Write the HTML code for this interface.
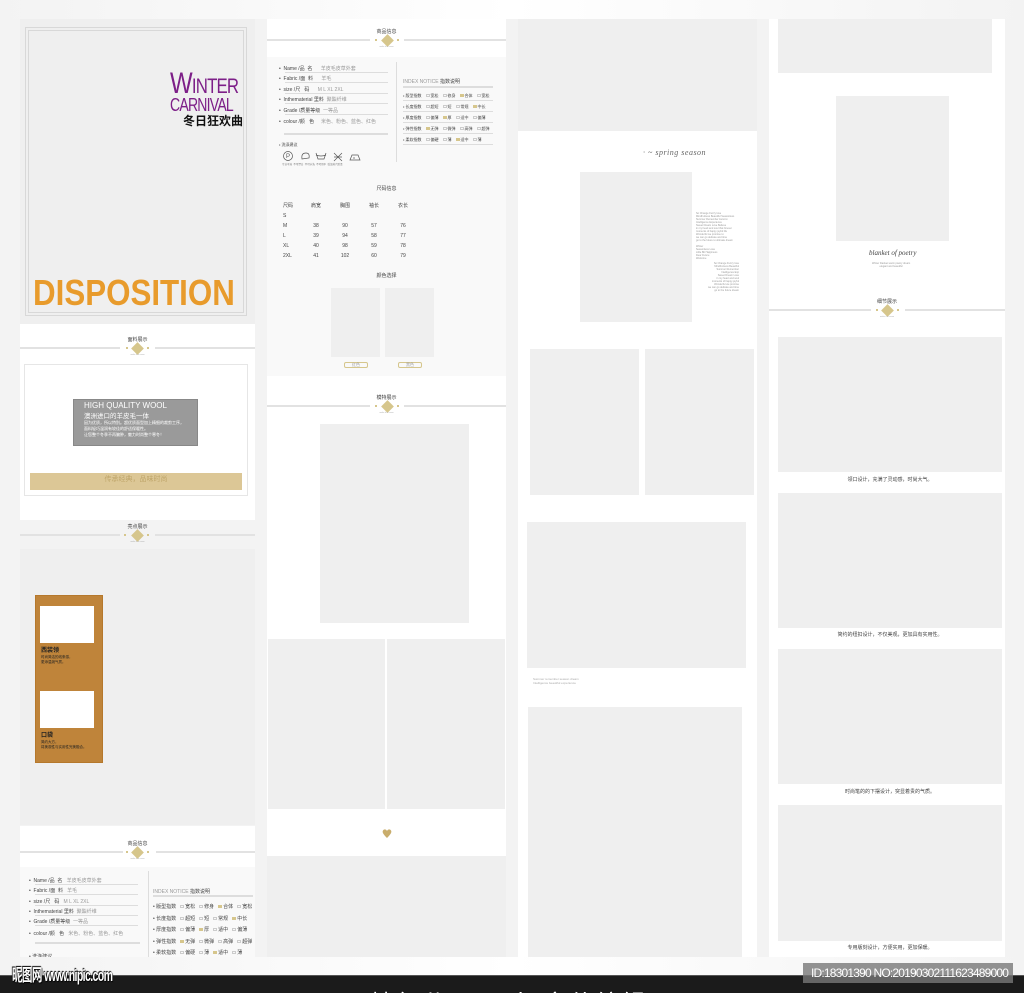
<!DOCTYPE html>
<html><head><meta charset="utf-8"><style>
*{margin:0;padding:0;box-sizing:border-box}
body{width:1024px;height:993px;overflow:hidden;background:#f3f3f3;font-family:"Liberation Sans","Noto Sans CJK SC",sans-serif;position:relative}
.a{position:absolute}
.w{background:#fff}.g{background:#efefef}
.t{font-size:5px;color:#555;white-space:nowrap}
.hd{position:absolute;height:20px}
.hd .ln{position:absolute;top:8px;height:2px;background:#e2e2e2}
.hd .ti{position:absolute;top:-3px;width:100%;text-align:center;font-size:5px;color:#444}
.hd .dm{position:absolute;top:5px;width:9px;height:9px;background:#d6c68c;transform:rotate(45deg)}
.hd .dt{position:absolute;top:8px;width:2px;height:2px;background:#d6c68c}
.hd .su{position:absolute;top:15px;width:100%;text-align:center;font-size:2px;color:#aaa}
.row{position:absolute;font-size:5px;color:#444;white-space:nowrap}
.ul{position:absolute;height:1px;background:#ddd}
.gr{color:#999}
.ck{display:inline-block;width:4px;height:3px;border:1px solid #ccc;margin:0 1px 0 4px}
.ck.y{background:#d6c68c;border-color:#d6c68c}
</style></head><body>
<div class="a" style="left:0;top:0;width:1024px;height:19px;background:linear-gradient(90deg,#f3f3f3,#fff 50%,#f3f3f3)"></div>

<!-- COLUMN 1 -->
<div class="a g" style="left:20px;top:19px;width:235px;height:305px"></div>
<div class="a" style="left:25px;top:27px;width:222px;height:289px;border:1px solid #d8d8d8"></div>
<div class="a" style="left:28px;top:30px;width:216px;height:283px;border:1px solid #d8d8d8"></div>
<div class="a" style="left:170px;top:74px;color:#7d1f88;font-size:21px;line-height:20px;letter-spacing:-1px;transform:scaleX(.8);transform-origin:left;white-space:nowrap"><span style="font-size:30px">W</span>INTER</div>
<div class="a" style="left:170px;top:96px;color:#7d1f88;font-size:18px;line-height:18px;letter-spacing:-1px;transform:scaleX(.78);transform-origin:left;white-space:nowrap">CARNIVAL</div>
<div class="a" style="left:183px;top:112px;color:#111;font-size:12px;font-weight:bold">冬日狂欢曲</div>
<div class="a" style="left:33px;top:273px;color:#e89b2c;font-size:36px;line-height:40px;font-weight:bold;transform:scaleX(.87);transform-origin:left;white-space:nowrap">DISPOSITION</div>

<div class="a w" style="left:20px;top:324px;width:235px;height:196px"></div>
<div class="hd" style="left:20px;top:339px;width:235px"><div class="ln" style="left:0;width:100px"></div><div class="ln" style="left:135px;width:100px"></div><div class="ti">面料展示</div><div class="dm" style="left:113px"></div><div class="dt" style="left:106px"></div><div class="dt" style="left:127px"></div><div class="su">make it to come</div></div>
<div class="a" style="left:24px;top:364px;width:224px;height:132px;border:1px solid #e6e6e6"></div>
<div class="a" style="left:73px;top:399px;width:125px;height:47px;background:#9a9a9a;border:1px solid #888"></div>
<div class="a" style="left:84px;top:401px;color:#fff;font-size:8px;white-space:nowrap">HIGH QUALITY WOOL</div>
<div class="a" style="left:84px;top:410px;color:#fff;font-size:6.5px">澳洲进口的羊皮毛一体</div>
<div class="a" style="left:84px;top:420px;color:#fff;font-size:4px;line-height:6px;white-space:nowrap">因为优质，所以特别。超优质面型加上精细的裁剪工序，<br>面料轻巧温润有较佳的舒适保暖性。<br>让您整个冬季不再臃肿，魅力时尚整个寒冬！</div>
<div class="a" style="left:30px;top:473px;width:212px;height:17px;background:#dcc796;color:#bfa66a;font-size:7px;text-align:center;line-height:14px">传承经典，品味时尚</div>

<div class="hd" style="left:20px;top:526px;width:235px"><div class="ln" style="left:0;width:100px"></div><div class="ln" style="left:135px;width:100px"></div><div class="ti">亮点展示</div><div class="dm" style="left:113px"></div><div class="dt" style="left:104px"></div><div class="dt" style="left:127px"></div><div class="su">make it to come</div></div>
<div class="a g" style="left:20px;top:549px;width:235px;height:276px"></div>
<div class="a" style="left:35px;top:595px;width:68px;height:168px;background:#bf843a;border:1px solid #b5782c"></div>
<div class="a w" style="left:40px;top:606px;width:54px;height:37px"></div>
<div class="a w" style="left:40px;top:691px;width:54px;height:37px"></div>
<div class="a" style="left:41px;top:645px;font-size:6px;font-weight:bold;color:#222">西装领</div>
<div class="a" style="left:41px;top:655px;font-size:3.5px;line-height:5px;color:#222;white-space:nowrap">时尚简洁的线条感，<br>更添温婉气质。</div>
<div class="a" style="left:41px;top:730px;font-size:6px;font-weight:bold;color:#222">口袋</div>
<div class="a" style="left:41px;top:740px;font-size:3.5px;line-height:5px;color:#222;white-space:nowrap">简约大方，<br>将美观性与实用性完美融合。</div>

<div class="a w" style="left:20px;top:826px;width:235px;height:41px"></div>
<div class="hd" style="left:20px;top:843px;width:235px"><div class="ln" style="left:0;width:103px"></div><div class="ln" style="left:136px;width:99px"></div><div class="ti">商品信息</div><div class="dm" style="left:113px"></div><div class="dt" style="left:106px"></div><div class="dt" style="left:127px"></div><div class="su">make it to come</div></div>
<div class="a" style="left:20px;top:867px;width:235px;height:90px;background:#f9f9f9;overflow:hidden">
 <div class="row" style="left:9px;top:10px">• &nbsp;Name /品 &nbsp;名 &nbsp; <span class="gr">羊皮毛皮草外套</span></div><div class="ul" style="left:15px;top:17px;width:103px"></div>
 <div class="row" style="left:9px;top:20px">• &nbsp;Fabric /面 &nbsp;料 &nbsp; <span class="gr">羊毛</span></div><div class="ul" style="left:15px;top:27px;width:103px"></div>
 <div class="row" style="left:9px;top:31px">• &nbsp;size /尺 &nbsp;&nbsp;码 &nbsp; <span class="gr">M L XL 2XL</span></div><div class="ul" style="left:15px;top:38px;width:103px"></div>
 <div class="row" style="left:9px;top:41px">• &nbsp;Inthematerial 里料 &nbsp;<span class="gr">聚酯纤维</span></div><div class="ul" style="left:15px;top:48px;width:103px"></div>
 <div class="row" style="left:9px;top:51px">• &nbsp;Grade /质量等级 &nbsp;<span class="gr">一等品</span></div><div class="ul" style="left:15px;top:58px;width:103px"></div>
 <div class="row" style="left:9px;top:63px">• &nbsp;colour /颜 &nbsp;&nbsp;色 &nbsp; <span class="gr">米色、粉色、蓝色、红色</span></div>
 <div class="ul" style="left:15px;top:75px;width:105px;height:2px"></div>
 <div class="row" style="left:9px;top:86px">• 洗涤建议</div>
 <div class="a" style="left:128px;top:4px;width:1px;height:90px;background:#ddd"></div>
 <div class="row gr" style="left:133px;top:21px">INDEX NOTICE <span style="color:#444">指数说明</span></div><div class="ul" style="left:133px;top:28px;width:100px;height:2px"></div>
 <div class="row" style="left:133px;top:36px">• 版型指数<span class="ck"></span>宽松<span class="ck"></span>修身<span class="ck y"></span>合体<span class="ck"></span>宽松</div>
 <div class="row" style="left:133px;top:48px">• 长度指数<span class="ck"></span>超短<span class="ck"></span>短<span class="ck"></span>常规<span class="ck y"></span>中长</div>
 <div class="row" style="left:133px;top:59px">• 厚度指数<span class="ck"></span>偏薄<span class="ck y"></span>厚<span class="ck"></span>适中<span class="ck"></span>偏薄</div>
 <div class="row" style="left:133px;top:71px">• 弹性指数<span class="ck y"></span>无弹<span class="ck"></span>微弹<span class="ck"></span>高弹<span class="ck"></span>超弹</div>
 <div class="row" style="left:133px;top:82px">• 柔软指数<span class="ck"></span>偏硬<span class="ck"></span>薄<span class="ck y"></span>适中<span class="ck"></span>薄</div>
</div>

<!-- COLUMN 2 -->
<div class="a w" style="left:267px;top:19px;width:239px;height:38px"></div>
<div class="hd" style="left:267px;top:31px;width:239px"><div class="ln" style="left:0;width:103px"></div><div class="ln" style="left:137px;width:102px"></div><div class="ti">商品信息</div><div class="dm" style="left:116px"></div><div class="dt" style="left:108px"></div><div class="dt" style="left:130px"></div><div class="su">make it to come</div></div>
<div class="a" style="left:267px;top:57px;width:239px;height:319px;background:#f9f9f9">
 <div class="row" style="left:12px;top:8px">• &nbsp;Name /品 &nbsp;名 &nbsp;&nbsp;&nbsp;&nbsp; <span class="gr">羊皮毛皮草外套</span></div><div class="ul" style="left:18px;top:15px;width:103px"></div>
 <div class="row" style="left:12px;top:18px">• &nbsp;Fabric /面 &nbsp;料 &nbsp;&nbsp;&nbsp;&nbsp; <span class="gr">羊毛</span></div><div class="ul" style="left:18px;top:25px;width:103px"></div>
 <div class="row" style="left:12px;top:29px">• &nbsp;size /尺 &nbsp;&nbsp;码 &nbsp;&nbsp;&nbsp;&nbsp; <span class="gr">M L XL 2XL</span></div><div class="ul" style="left:18px;top:36px;width:103px"></div>
 <div class="row" style="left:12px;top:39px">• &nbsp;Inthematerial 里料 &nbsp;<span class="gr">聚酯纤维</span></div><div class="ul" style="left:18px;top:46px;width:103px"></div>
 <div class="row" style="left:12px;top:50px">• &nbsp;Grade /质量等级 &nbsp;<span class="gr">一等品</span></div><div class="ul" style="left:18px;top:57px;width:103px"></div>
 <div class="row" style="left:12px;top:61px">• &nbsp;colour /颜 &nbsp;&nbsp;色 &nbsp;&nbsp;&nbsp; <span class="gr">米色、粉色、蓝色、红色</span></div>
 <div class="ul" style="left:17px;top:76px;width:104px;height:2px"></div>
 <div class="row" style="left:12px;top:85px;font-size:4px">• 洗涤建议</div>
 <svg class="a" style="left:15px;top:93px" width="90" height="16" viewBox="0 0 90 16" fill="none" stroke="#555" stroke-width=".7"><circle cx="6" cy="6" r="4.5"/><text x="4" y="8" font-size="6" fill="#555" stroke="none">P</text><path d="M20 9q-1-6 4-6 4 0 3 5z"/><path d="M34 3l2 6h6l2-6M34 5q5 2 10 0"/><path d="M52 3l8 8M60 3l-8 8M52 7h8"/><path d="M68 10l2-5h6l2 5zM72 7v2"/><text x="0" y="15" font-size="2.5" fill="#777" stroke="none">专业干洗 &nbsp;不可漂白 &nbsp;不可水洗 &nbsp;不可甩干 &nbsp;低温蒸汽熨烫</text></svg>
 <div class="a" style="left:129px;top:5px;width:1px;height:100px;background:#ddd"></div>
 <div class="row gr" style="left:136px;top:21px">INDEX NOTICE <span style="color:#444">指数说明</span></div><div class="ul" style="left:136px;top:29px;width:90px;height:2px"></div>
 <div class="row" style="left:136px;top:36px;font-size:4px">• 版型指数<span class="ck"></span>宽松<span class="ck"></span>修身<span class="ck y"></span>合体<span class="ck"></span>宽松</div><div class="ul" style="left:136px;top:43px;width:90px"></div>
 <div class="row" style="left:136px;top:47px;font-size:4px">• 长度指数<span class="ck"></span>超短<span class="ck"></span>短<span class="ck"></span>常规<span class="ck y"></span>中长</div><div class="ul" style="left:136px;top:54px;width:90px"></div>
 <div class="row" style="left:136px;top:58px;font-size:4px">• 厚度指数<span class="ck"></span>偏薄<span class="ck y"></span>厚<span class="ck"></span>适中<span class="ck"></span>偏薄</div><div class="ul" style="left:136px;top:65px;width:90px"></div>
 <div class="row" style="left:136px;top:69px;font-size:4px">• 弹性指数<span class="ck y"></span>无弹<span class="ck"></span>微弹<span class="ck"></span>高弹<span class="ck"></span>超弹</div><div class="ul" style="left:136px;top:76px;width:90px"></div>
 <div class="row" style="left:136px;top:80px;font-size:4px">• 柔软指数<span class="ck"></span>偏硬<span class="ck"></span>薄<span class="ck y"></span>适中<span class="ck"></span>薄</div><div class="ul" style="left:136px;top:87px;width:90px"></div>
 <div class="row" style="left:0;width:239px;text-align:center;top:128px">尺码信息</div>
 <div class="row" style="left:16px;top:144px;line-height:10px">尺码<br>S<br>M<br>L<br>XL<br>2XL</div>
 <div class="row" style="left:44px;top:144px;line-height:10px;text-align:center">肩宽<br>&nbsp;<br>38<br>39<br>40<br>41</div>
 <div class="row" style="left:73px;top:144px;line-height:10px;text-align:center">胸围<br>&nbsp;<br>90<br>94<br>98<br>102</div>
 <div class="row" style="left:102px;top:144px;line-height:10px;text-align:center">袖长<br>&nbsp;<br>57<br>58<br>59<br>60</div>
 <div class="row" style="left:131px;top:144px;line-height:10px;text-align:center">衣长<br>&nbsp;<br>76<br>77<br>78<br>79</div>
 <div class="row" style="left:0;width:239px;text-align:center;top:215px">颜色选择</div>
 <div class="a g" style="left:64px;top:231px;width:49px;height:69px"></div>
 <div class="a g" style="left:118px;top:231px;width:49px;height:69px"></div>
 <div class="a" style="left:77px;top:305px;width:24px;height:6px;border:1px solid #d6c68c;border-radius:2px;font-size:4px;text-align:center;line-height:4px;color:#999">红色</div>
 <div class="a" style="left:131px;top:305px;width:24px;height:6px;border:1px solid #d6c68c;border-radius:2px;font-size:4px;text-align:center;line-height:4px;color:#999">黑色</div>
</div>
<div class="a w" style="left:267px;top:376px;width:239px;height:481px"></div>
<div class="hd" style="left:267px;top:397px;width:239px"><div class="ln" style="left:0;width:103px"></div><div class="ln" style="left:137px;width:102px"></div><div class="ti">模特展示</div><div class="dm" style="left:116px"></div><div class="dt" style="left:108px"></div><div class="dt" style="left:130px"></div><div class="su">make it to come</div></div>
<div class="a g" style="left:320px;top:424px;width:149px;height:199px"></div>
<div class="a g" style="left:268px;top:639px;width:117px;height:170px"></div>
<div class="a g" style="left:387px;top:639px;width:118px;height:170px"></div>
<svg class="a" style="left:382px;top:828px" width="10" height="11" viewBox="0 0 10 11"><path d="M5 10C1 6 0 4 1 2.5 2 1 4 1 5 3 6 1 8 1 9 2.5 10 4 9 6 5 10z" fill="#c9ad6c"/></svg>
<div class="a g" style="left:267px;top:856px;width:239px;height:101px"></div>

<!-- COLUMN 3 -->
<div class="a w" style="left:518px;top:19px;width:239px;height:938px"></div>
<div class="a g" style="left:518px;top:19px;width:239px;height:112px"></div>
<div class="a" style="left:643px;top:148px;font-family:'Liberation Serif',serif;font-style:italic;font-size:8px;color:#666;white-space:nowrap;letter-spacing:.5px">· ~ spring season</div>
<div class="a g" style="left:580px;top:172px;width:112px;height:150px"></div>
<div class="a" style="left:696px;top:212px;font-size:2.5px;line-height:3px;color:#999;white-space:nowrap">So Change Fuzzy love<br>MindFulness Beautiful Seasonless<br>Summer Remember Autumn<br>Intelligence Experience<br>Sweet Dream Love Believe<br>in my heart and soul that forever<br>moments of happy joyful life<br>Wonderful we promise to<br>we can go delicate and time<br>go to the future to ultimate dream<br><br>Winter<br>Seasonless Love<br>Little Bit Happiness<br>Dear Future<br>Welcome</div>
<div class="a" style="left:708px;top:262px;font-size:2.5px;line-height:3px;color:#999;white-space:nowrap;text-align:right">So Change Fuzzy love<br>MindFulness Beautiful<br>Summer Remember<br>Intelligence Exp<br>Sweet Dream Love<br>in my heart and soul<br>moments of happy joyful<br>Wonderful we promise<br>we can go delicate and time<br>go to the future dream</div>
<div class="a g" style="left:530px;top:349px;width:109px;height:146px"></div>
<div class="a g" style="left:645px;top:349px;width:109px;height:146px"></div>
<div class="a g" style="left:527px;top:522px;width:219px;height:146px"></div>
<div class="a" style="left:533px;top:677px;font-size:3px;line-height:4px;color:#aaa;white-space:nowrap">Summer remember season dream<br>Intelligence beautiful experience</div>
<div class="a g" style="left:528px;top:707px;width:214px;height:250px"></div>

<!-- COLUMN 4 -->
<div class="a w" style="left:769px;top:19px;width:236px;height:938px"></div>
<div class="a g" style="left:778px;top:19px;width:214px;height:54px"></div>
<div class="a g" style="left:836px;top:96px;width:113px;height:145px"></div>
<div class="a" style="left:869px;top:249px;font-family:'Liberation Serif',serif;font-style:italic;font-size:7px;color:#444;white-space:nowrap">blanket of poetry</div>
<div class="a" style="left:872px;top:262px;font-size:2.5px;line-height:3px;color:#999;white-space:nowrap;text-align:center">Winter blanket warm poetry dream<br>elegant and beautiful</div>
<div class="hd" style="left:769px;top:301px;width:236px"><div class="ln" style="left:0;width:102px"></div><div class="ln" style="left:136px;width:100px"></div><div class="ti">细节展示</div><div class="dm" style="left:114px"></div><div class="dt" style="left:107px"></div><div class="dt" style="left:128px"></div><div class="su">make it to come</div></div>
<div class="a g" style="left:778px;top:337px;width:224px;height:135px"></div>
<div class="row" style="left:778px;width:224px;text-align:center;top:476px">领口设计，充满了灵动感，时尚大气。</div>
<div class="a g" style="left:778px;top:493px;width:224px;height:135px"></div>
<div class="row" style="left:778px;width:224px;text-align:center;top:631px">简约的纽扣设计，不仅美观，更加具有实用性。</div>
<div class="a g" style="left:778px;top:649px;width:224px;height:135px"></div>
<div class="row" style="left:778px;width:224px;text-align:center;top:788px">时尚笔的的下摆设计，突显着贵的气质。</div>
<div class="a g" style="left:778px;top:805px;width:224px;height:136px"></div>
<div class="row" style="left:778px;width:224px;text-align:center;top:944px">专用版刻设计，方便实用，更加保暖。</div>

<!-- FOOTER -->
<div class="a" style="left:0;top:957px;width:1024px;height:18px;background:linear-gradient(90deg,#f3f3f3,#fff 50%,#f3f3f3)"></div>
<div class="a" style="left:0;top:975px;width:1024px;height:18px;background:#1b1b1b;border-top:1px solid #555;overflow:hidden">
 <div class="a" style="left:370px;top:8px;color:#fff;font-size:24px;white-space:nowrap;letter-spacing:2px">精细分层 一人 文件编辑</div>
</div>
<div class="a" style="left:12px;top:961px;color:#fff;font-size:17px;font-weight:bold;white-space:nowrap;letter-spacing:-1px;transform:scaleX(.62);transform-origin:left;text-shadow:0 0 1px #000,1px 1px 1px #000,-1px -1px 1px #000">昵图网 www.nipic.com</div>
<div class="a" style="left:803px;top:963px;width:210px;height:20px;background:rgba(120,120,120,.8);color:#fff;font-size:12px;line-height:20px;white-space:nowrap;overflow:hidden;letter-spacing:-.8px;padding-left:8px">ID:18301390 NO:20190302111623489000</div>
</body></html>
